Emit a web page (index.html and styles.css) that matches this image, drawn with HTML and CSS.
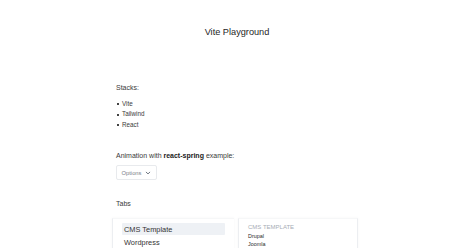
FILE: index.html
```html
<!DOCTYPE html>
<html lang="en">
  <head>
    <meta charset="UTF-8" />
    <meta name="viewport" content="width=device-width, initial-scale=1.0" />
    <title>Vite Playground</title>
    <link rel="stylesheet" href="styles.css">
  </head>
  <body>
    <div class="page">
      <h1 class="title">Vite Playground</h1>

      <p class="label">Stacks:</p>
      <ul class="stack-list">
        <li>Vite</li>
        <li>Tailwind</li>
        <li>React</li>
      </ul>

      <p class="label anim-label">Animation with <b>react-spring</b> example:</p>
      <div class="options-btn">
        <span>Options</span>
        <svg width="6" height="4" viewBox="0 0 6 4">
          <path d="M1.2 1.2 L3 2.9 L4.8 1.2" fill="none" stroke="#4b5563" stroke-width="0.8" stroke-linecap="round" stroke-linejoin="round" />
        </svg>
      </div>

      <p class="label tabs-label">Tabs</p>
      <div class="tabs">
        <div class="tab-list">
          <div class="tab active">CMS Template</div>
          <div class="tab">Wordpress</div>
        </div>
        <div class="tab-panel">
          <div class="panel-title">CMS TEMPLATE</div>
          <div class="panel-item">Drupal</div>
          <div class="panel-item">Joomla</div>
        </div>
      </div>
    </div>
  </body>
</html>
```

FILE: styles.css
```css
* {
  margin: 0;
  padding: 0;
  box-sizing: border-box;
}
body {
  background-color: #ffffff;
  font-family: "Liberation Sans", Arial, sans-serif;
  color: #333333;
}
.page {
  width: 242px;
  margin: 0 auto;
  padding-top: 26px;
}
.title {
  text-align: center;
  font-size: 9.2px;
  line-height: 12px;
  font-weight: normal;
  color: #262626;
}
.label {
  margin-top: 45px;
  font-size: 7px;
  line-height: 10px;
  color: #3a3a3a;
}
.stack-list {
  margin-top: 5.5px;
  padding-left: 6px;
  list-style: none;
  font-size: 6.3px;
  line-height: 10.5px;
  color: #3a3a3a;
}
.stack-list li {
  position: relative;
}
.stack-list li::before {
  content: "";
  position: absolute;
  left: -5px;
  top: 4.5px;
  width: 2px;
  height: 2px;
  background-color: #444444;
}
.anim-label {
  margin-top: 21px;
}
.anim-label b {
  color: #1a1a1a;
}
.options-btn {
  margin-top: 4px;
  width: 41px;
  height: 15px;
  display: flex;
  align-items: center;
  justify-content: center;
  gap: 4px;
  border: 1px solid #e8eaed;
  border-radius: 2px;
  font-size: 5.8px;
  color: #7a808a;
}
.tabs-label {
  margin-top: 19px;
}
.tabs {
  margin-top: 9px;
  margin-left: -4px;
  width: 246px;
  display: grid;
  grid-template-columns: 122px 1fr;
  gap: 4px;
}
.tab-list {
  height: 40px;
  padding: 4px 9px 0 9px;
  border-left: 1px solid #eceef1;
  border-top: 1px solid #f6f7f8;
  box-shadow: 0 0 3px rgba(0, 0, 0, 0.04);
}
.tab {
  height: 12px;
  padding-left: 2px;
  display: flex;
  align-items: center;
  font-size: 7.4px;
  color: #333333;
}
.tab.active {
  background-color: #eef1f5;
  border-radius: 1px;
  margin-bottom: 1px;
}
.tab-panel {
  height: 40px;
  padding: 3.5px 9px 0 9px;
  border-left: 1px solid #eceef1;
  border-right: 1px solid #eceef1;
  border-top: 1px solid #f6f7f8;
  box-shadow: 0 0 3px rgba(0, 0, 0, 0.04);
}
.panel-title {
  font-size: 6px;
  line-height: 9px;
  color: #a7adb6;
}
.panel-item {
  font-size: 5.4px;
  line-height: 8.5px;
  color: #2a2a2a;
}
```
